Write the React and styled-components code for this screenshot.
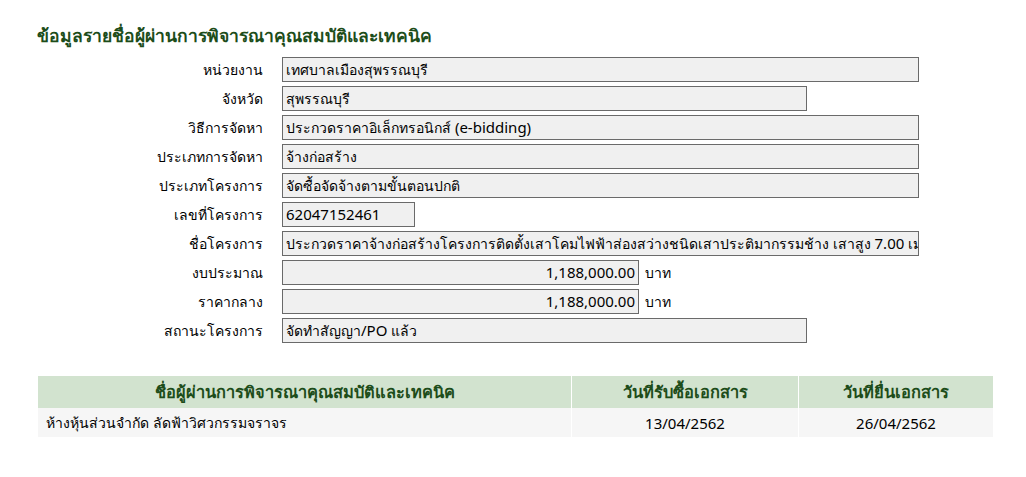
import React from "react";
import styled, { createGlobalStyle } from "styled-components";

const Global = createGlobalStyle`
  html, body { margin: 0; padding: 0; background: #fff; }
  body { font-family: Tahoma, "Noto Sans", "DejaVu Sans", sans-serif; color: #000; }
`;

const Page = styled.div`
  padding: 23px 33px 0 37px;
  width: 956px;
`;

const Title = styled.h2`
  margin: 0 0 10px 0;
  font-size: 17.5px;
  font-weight: bold;
  color: #1d4d1a;
  line-height: 24px;
`;

const Form = styled.div`
  display: grid;
  grid-template-columns: 226px auto;
  column-gap: 19px;
  row-gap: 4px;
  align-items: center;
`;

const Label = styled.div`
  text-align: right;
  font-size: 14px;
  line-height: 25px;
`;

const FieldWrap = styled.div`
  display: flex;
  align-items: center;
  gap: 6px;
`;

const Field = styled.div`
  box-sizing: border-box;
  width: ${(p) => p.$w}px;
  height: 25px;
  border: 1px solid #6a6a6a;
  background: #f0f0f0;
  font-size: 14px;
  line-height: 23px;
  padding: 0 3px;
  white-space: nowrap;
  overflow: hidden;
  text-align: ${(p) => (p.$right ? "right" : "left")};
`;

const Latin = styled.span`
  font-size: 15px;
`;

const Unit = styled.span`
  font-size: 14px;
`;

const Table = styled.table`
  margin-top: 33px;
  width: 957px;
  border-collapse: separate;
  border-spacing: 1px 0;
`;

const Th = styled.th`
  background: #d2e3cf;
  color: #1d4d1a;
  font-size: 16.4px;
  font-weight: bold;
  height: 32px;
  padding: 0;
  text-align: center;
  width: ${(p) => p.$w}px;
`;

const Td = styled.td`
  background: #f6f6f6;
  font-size: 14px;
  height: 29px;
  padding: 0 ${(p) => (p.$left ? "8px" : "0")};
  text-align: ${(p) => (p.$left ? "left" : "center")};
`;

function Mixed({ text }) {
  const parts = text.split(/([\u0E00-\u0E7F]+)/);
  return parts.map((p, i) =>
    /[A-Za-z0-9]/.test(p) ? <Latin key={i}>{p}</Latin> : <React.Fragment key={i}>{p}</React.Fragment>
  );
}

const rows = [
  { label: "หน่วยงาน", value: "เทศบาลเมืองสุพรรณบุรี", w: 637 },
  { label: "จังหวัด", value: "สุพรรณบุรี", w: 525 },
  { label: "วิธีการจัดหา", value: "ประกวดราคาอิเล็กทรอนิกส์ (e-bidding)", w: 637 },
  { label: "ประเภทการจัดหา", value: "จ้างก่อสร้าง", w: 637 },
  { label: "ประเภทโครงการ", value: "จัดซื้อจัดจ้างตามขั้นตอนปกติ", w: 637 },
  { label: "เลขที่โครงการ", value: "62047152461", w: 133 },
  {
    label: "ชื่อโครงการ",
    value:
      "ประกวดราคาจ้างก่อสร้างโครงการติดตั้งเสาโคมไฟฟ้าส่องสว่างชนิดเสาประติมากรรมช้าง เสาสูง 7.00 เมตร",
    w: 637,
  },
  { label: "งบประมาณ", value: "1,188,000.00", w: 357, right: true, unit: "บาท" },
  { label: "ราคากลาง", value: "1,188,000.00", w: 357, right: true, unit: "บาท" },
  { label: "สถานะโครงการ", value: "จัดทำสัญญา/PO แล้ว", w: 525 },
];

export default function App() {
  return (
    <Page>
      <Global />
      <Title>ข้อมูลรายชื่อผู้ผ่านการพิจารณาคุณสมบัติและเทคนิค</Title>
      <Form>
        {rows.map((r) => (
          <React.Fragment key={r.label}>
            <Label>{r.label}</Label>
            <FieldWrap>
              <Field $w={r.w} $right={r.right}>
                <Mixed text={r.value} />
              </Field>
              {r.unit && <Unit>{r.unit}</Unit>}
            </FieldWrap>
          </React.Fragment>
        ))}
      </Form>
      <Table>
        <thead>
          <tr>
            <Th $w={533}>ชื่อผู้ผ่านการพิจารณาคุณสมบัติและเทคนิค</Th>
            <Th $w={226}>วันที่รับซื้อเอกสาร</Th>
            <Th $w={194}>วันที่ยื่นเอกสาร</Th>
          </tr>
        </thead>
        <tbody>
          <tr>
            <Td $left>ห้างหุ้นส่วนจำกัด ลัดฟ้าวิศวกรรมจราจร</Td>
            <Td>
              <Latin>13/04/2562</Latin>
            </Td>
            <Td>
              <Latin>26/04/2562</Latin>
            </Td>
          </tr>
        </tbody>
      </Table>
    </Page>
  );
}
